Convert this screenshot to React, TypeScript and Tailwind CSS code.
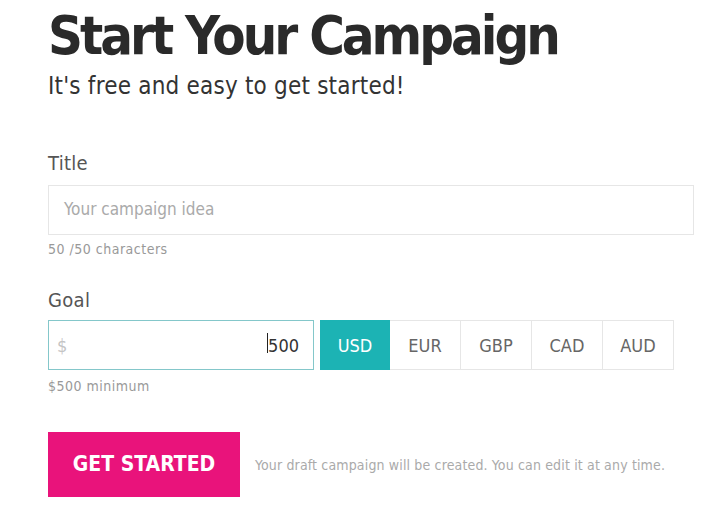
const narrow = "font-['Liberation_Sans_Narrow','DejaVu_Sans_Condensed',sans-serif]";

const currencies = ["USD", "EUR", "GBP", "CAD", "AUD"];

export default function App() {
  return (
    <div className={`min-h-[517px] w-[720px] bg-white pl-12 ${narrow}`}>
      <h1 className="pt-[6px] text-[54px] font-bold leading-[60px] tracking-[-3px] text-[#2a2a2a]">
        Start Your Campaign
      </h1>
      <p className="mt-[6px] text-[24px] leading-[28px] tracking-[0.2px] text-[#333]">
        It's free and easy to get started!
      </p>

      <div className="mt-[52px]">
        <label className="block text-[20px] leading-[22px] tracking-[0.3px] text-[#555]">Title</label>
        <div className="mt-[11px] flex h-[50px] w-[646px] items-center border border-[#e6e6e6] px-[15px]">
          <span className="text-[17px] text-[#aaa]">Your campaign idea</span>
        </div>
        <div className="mt-[6px] text-[14px] leading-[16px] tracking-[0.5px] text-[#999]">50 /50 characters</div>
      </div>

      <div className="mt-[32px]">
        <label className="block text-[20px] leading-[22px] tracking-[0.3px] text-[#555]">Goal</label>
        <div className="mt-[9px] flex h-[50px]">
          <div className="flex w-[266px] items-center justify-between border border-[#84c7ca] pl-[8px] pr-[14px]">
            <span className="text-[18px] text-[#c4c4c4]">$</span>
            <span className="relative text-[18px] text-[#333]">
              <span className="absolute left-[-1px] top-[1px] h-[20px] w-px bg-[#222]" />
              500
            </span>
          </div>
          <div className="ml-[6px] flex">
            {currencies.map((c, i) => (
              <div
                key={c}
                className={
                  i === 0
                    ? "flex w-[70px] items-center justify-center bg-[#1cb3b4] text-[18px] text-white"
                    : "flex w-[71px] items-center justify-center border-y border-r border-[#e6e6e6] text-[18px] text-[#666]"
                }
              >
                {c}
              </div>
            ))}
          </div>
        </div>
        <div className="mt-[8px] text-[14px] leading-[16px] tracking-[0.5px] text-[#999]">$500 minimum</div>
      </div>

      <div className="mt-[38px] flex items-center">
        <button className="h-[65px] w-[192px] bg-[#e9137b] text-[21px] font-bold text-white">GET STARTED</button>
        <span className="ml-[15px] mt-[2px] text-[14px] tracking-[0.15px] text-[#aaa]">
          Your draft campaign will be created. You can edit it at any time.
        </span>
      </div>
    </div>
  );
}
